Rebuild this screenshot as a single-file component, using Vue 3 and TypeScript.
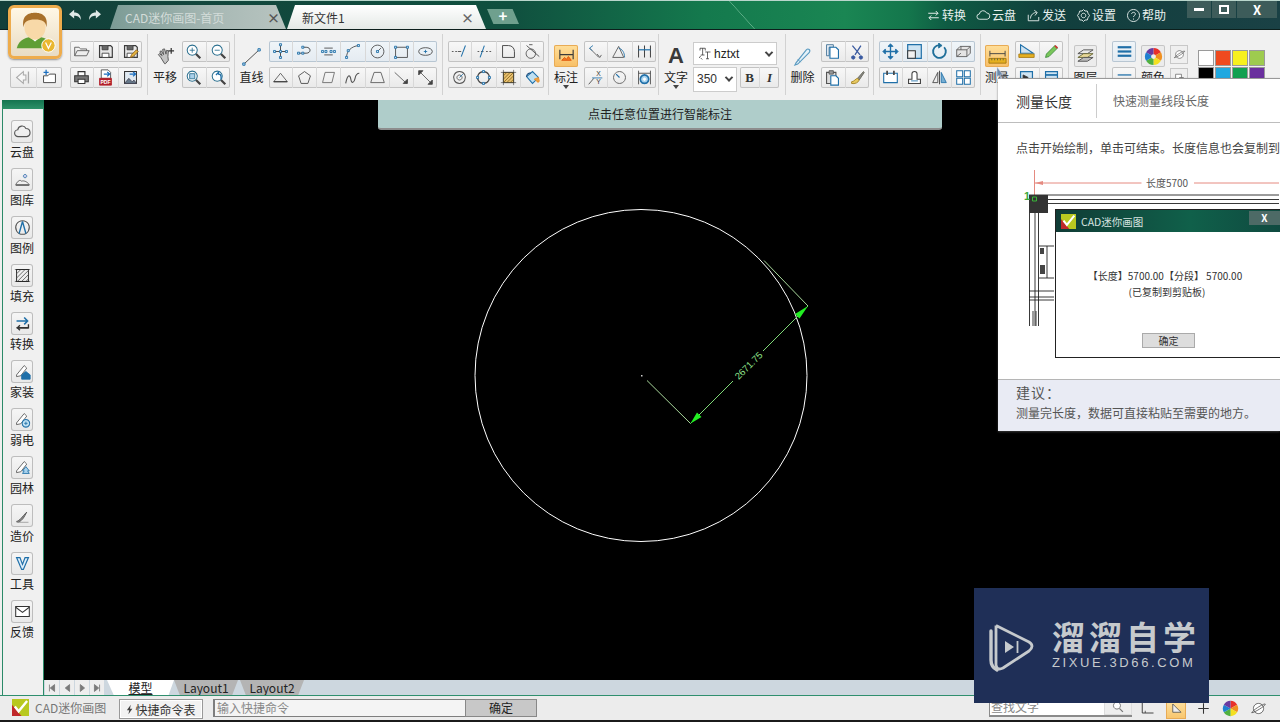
<script setup lang="ts">
type P = [string, string?, string?, number?];
const K = '#444';
const B = '#1f6fa8';
const nodes = (pts: number[][]) => pts.map(([x, y]) => `M${x - 1.2} ${y - 1.2}h2.4v2.4h-2.4z`).join('');
const nodeP = (pts: number[][]): P => [nodes(pts), B, '#cfe4f3', 1];
const glass = (fill = '#fff'): P[] => [
  ['M8.5 2.5a6 6 0 1 0 .01 0z', '#2a6f8f', fill, 1.2],
  ['M13 13l5 5', '#444', undefined, 2.6],
];
const floppy: P[] = [
  ['M3 3h13l2 2v12H3z', '#3c3c3c', '#e8e8e8', 1.4],
  ['M6 3v5h7V3', '#3c3c3c', '#666', 1],
  ['M6 12h8v5H6z', '#3c3c3c', '#fff', 1],
];

const icons: Record<string, P[]> = {
  open: [['M2 15V5h5l2 2h7v2', '#555'], ['M2 15l3-6h14l-3 6z', '#555', '#eee']],
  save: floppy,
  saveas: [...floppy, ['M10 17l1-3 6-6 2 2-6 6z', '#8a5a10', '#e8b840']],
  print: [['M6 8V3h8v5', '#333', '#fff', 1.4], ['M2 8h16v7H2z', '#333', '#777', 1.2], ['M6 12h8v5H6z', '#333', '#fff', 1.2]],
  pdf: [['M5 1h8l3 3v7H5z', '#444', '#fff'], ['M8 6h7M12 3.5l3 2.5-3 2.5', '#1b6fc0', undefined, 1.4], ['M3 11h14v8H3z', '#b3202a', '#b3202a']],
  imgexp: [['M3 3h14v14H3z', '#333', '#e0e9f1', 1.2], ['M3 17l5-6 4 4 2-2 3 4z', '#445', '#66798a'], ['M9 6h7M13 3.5l3 2.5-3 2.5', '#1b6fc0', undefined, 1.4]],
  backbar: [['M11 3L3 10l8 7v-4h3V7h-3z', '#a8a8a8', '#f7f7f7', 1.2], ['M17 3v14', '#a8a8a8', undefined, 1.5]],
  newtab: [['M3 8h5l2-2h7v10H3z', '#333', '#fff'], ['M6 1v6M3 4h6', '#1b6fc0', undefined, 1.5]],
  hand: [['M5 11L2.5 8l1-1 3 2-2.500-4 1.500-1 2.500 4-1-5.500 2-.5 1.500 5.500.5-4 2 .5-.5 6 .5 4-3 3.500H9z', '#555', '#c4c4c4'], ['M16 1v6M13 4h6', '#333', undefined, 1.3]],
  zoomin: [...glass(), ['M5.500 8.500h6M8.500 5.500v6', '#2a6f8f']],
  zoomout: [...glass(), ['M5.500 8.500h6', '#2a6f8f']],
  zoomwin: [...glass('#fff'), ['M5.500 5.500h6v6h-6z', '#2a6f8f', '#a9d0ea']],
  zoomprev: [...glass(), ['M7 7l3-3v2c2 0 3 1 3 3v3', B, undefined, 1.5]],
  line: [['M2 18L18 3', '#4a4a4a'], nodeP([[2, 18], [18, 3]])],
  ortho: [['M10 2v16M2 10h16', '#333'], nodeP([[10, 2], [10, 10], [10, 17], [3, 10], [17, 10]])],
  polycurve: [['M2 12h6M8 5h4c6 0 6 7 0 7H8', '#333'], nodeP([[3, 12], [8, 12], [8, 5]])],
  dash: [['M5 6h10M5 14h10', '#444'], nodeP([[3, 10], [7, 10], [13, 10], [17, 10]])],
  arc: [['M3 17C3 9 9 4 17 3', '#444'], nodeP([[3, 17], [5, 9], [17, 3]])],
  circdot: [['M10 2.500a7.500 7.500 0 1 0 .01 0z', '#444'], ['M10 10l4-4', '#444'], nodeP([[10, 10]])],
  rect: [['M3 5h14v12H3z', '#444'], nodeP([[3, 5], [17, 5], [3, 17]])],
  ellipse: [['M2 10c0-6 16-6 16 0s-16 6-16 0z', '#444'], ['M8 10h4M10 8v4', B]],
  tri: [['M2 15L10 5l8 10z', '#555'], ['M2 15h16', '#222']],
  penta: [['M10 3l7 5-3 9H6L3 8z', '#444']],
  para: [['M6 4h11l-3 12H3z', '#666']],
  spline: [['M2 17C4 6 7 6 8 12s4 4 5-1 3-6 5-6', '#555', undefined, 1.3]],
  trap: [['M6 4h8l4 12H2z', '#555']],
  arrowd: [['M2 4l14 13', '#555'], ['M12 17h5v-5z', '#444', '#444']],
  arrowb: [['M3 3l14 14', '#555'], ['M2 7V2h5zM18 13v5h-5z', '#444', '#444']],
  trim: [['M1 10h2M5 10h2', '#444'], ['M8 10h4', '#444'], ['M12 16l5-13', B, undefined, 1.2]],
  extend: [['M3 10h2M7 10h3M13 10h2M17 10h2', '#444'], ['M6 17l5-14', B, undefined, 1.2]],
  fillet: [['M3 17V3h7c4 0 7 3 7 7v7z', '#444', undefined, 1.1]],
  chamfer: [['M8 7a5.500 5.500 0 1 0 .01 0z', '#444'], ['M3 3l15 13', '#444'], ['M6 2h4', '#444']],
  circle2: [['M10 3a7 7 0 1 0 .01 0z', '#555', undefined, 1.2], ['M10 7a3 3 0 1 0 .01 0z', '#555'], ['M10 10l4-4', B]],
  circle3: [['M10 3a7 7 0 1 0 .01 0z', '#444', undefined, 1.4], nodeP([[10, 3], [17, 10], [10, 17], [3, 10]])],
  hatch: [['M4 4h12v12H4z', '#5a4a20', '#e8c070'], ['M4 8l4-4M4 12l8-8M4 16l12-12M8 16l8-8M12 16l4-4', '#8a6a20'], ['M1 4h18M1 16h18M4 1v18M16 1v18', '#333', undefined, .7]],
  bucket: [['M3 9l7-6 7 7-7 7z', B, '#bfe0f2', 1.2], ['M3 9c0-3 3-5 5-4', '#147', undefined, 1.2], ['M12 12l5-2 1 4c0 2-3 2-3 0z', '#e8902a', '#f0a040']],
  dimA: [['M3 6l11 11', '#555'], ['M7 3l-4 3 3 3', B], ['M12 13l3 4 2-3', '#555']],
  dimB: [['M2 17h13L9 4z', '#555'], ['M9 6c4 1 7 5 7 11', B]],
  dimC: [['M3 3v14M10 3v14M17 3v14', '#444', undefined, 1.2], ['M3 8h14', B, undefined, 1.4]],
  xy: [['M2 18L8 11', '#444'], ['M6 10.500h12', B]],
  radius: [['M10 3a7 7 0 1 0 .01 0z', '#555'], ['M10 10L6 6', B, undefined, 1.3]],
  dimset: [['M3 2v16M17 2v16M3 5h14', '#444'], ['M10 7a5 5 0 1 0 .01 0z', B, '#a7d2ee', 2], ['M10 10.500a1.500 1.500 0 1 0 .01 0z', '#fff', '#fff']],
  dimact: [['M3 3v10M17 3v10M3 8h14', '#3a3a3a', undefined, 1.2], ['M5 14l3-3 2 2 2-3 3 4z', '#e05a10', '#ef7a20']],
  tt: [['M4 6V3h7v3M7.500 3v9M5 12h5', '#333'], ['M11 8h7M14 8v9M12 17h4', '#333', undefined, 1], ['M3 16l2-3M5 16l2 2', '#333']],
  eraser: [['M3 17l-1 2 3-1L17 6c2-3-1-5-3-3z', '#5a9ac0', '#e4f1f8', 1.2], ['M5 13l3 3', '#5a9ac0']],
  copy: [['M3 2h8v3H6v10H3z', '#3a6a90', '#e6eef5'], ['M7 5h7l3 3v10H7z', B, '#fff', 1.3]],
  scissors: [['M4 3l9 11M14 3L7 14', '#3a5aa0', undefined, 1.5], ['M5 15a2 2 0 1 0 .01 0zM14 15a2 2 0 1 0 .01 0z', '#3a5aa0', '#3a5aa0']],
  paste: [['M3 4h11v13H3z', '#555', '#ddd', 1.3], ['M6 2h5v4H6z', '#555', '#999'], ['M8 8h6l3 3v8H8z', B, '#fff', 1.3]],
  brush: [['M10 11l7-8 1 1-6 9z', '#665', '#888'], ['M3 15c3 0 5-4 7-4l2 2c-1 3-5 5-9 4z', '#a08020', '#e6c860']],
  move: [['M10 3v14M3 10h14', B, undefined, 1.6], ['M10 1l3 3H7zM10 19l-3-3h6zM1 10l3-3v6zM19 10l-3 3V7z', B, B]],
  scale: [['M2 2h16v16H2z', B, '#cde3f2', 1.4], ['M2 9h9v9H2z', '#333', '#f2f2f2', 1.2]],
  rotate: [['M15.500 5A7.500 7.500 0 1 1 10 2.500', '#1f6f9a', undefined, 2.2], ['M9 0v6l4-3z', '#1f6f9a', '#1f6f9a']],
  cube: [['M2 8l4-4h12v8l-4 4H2z', '#555', '#e4e4e4'], ['M2 8h12v8M14 8l4-4M7 4v4M7 12l-5 4', '#555']],
  arrayt: [['M2 5h16v11H2z', '#1f6fa8', '#fff', 1.3], ['M6 2v5M14 2v5', '#444', undefined, 2]],
  stretch: [['M3 17h14v-5h-4V6c0-4-6-4-6 0v6H3z', '#444', '#fff', 1.3], ['M6 14h8', B]],
  mirror: [['M10 2v16', '#333'], ['M8 4v12H2z', '#444', 'none'], ['M12 4v12h6z', B, '#77aed2']],
  grid4: [['M2 2h7v7H2zM11 2h7v7h-7zM2 11h7v7H2zM11 11h7v7h-7z', B, '#fff', 1.2]],
  measure: [['M2 4v6M18 4v6M2 7h16', '#444'], ['M1 12h18v5H1z', '#a87a10', '#e5b020'], ['M4 12v2M7 12v2M10 12v2M13 12v2M16 12v2', '#664']],
  area: [['M3 2v10l15 0z', B, '#cfe3f1', 1.3], ['M1 13h18v4H1z', '#a87a10', '#e5b020']],
  pencil: [['M4 13L14 3l3 3L7 16l-4 1z', '#3a8a3a', '#7ac65a'], ['M14 3l3 3', '#c33', undefined, 2]],
  boxa: [['M3 3h14v14H3z', B, '#cfe4f3', 1.4], ['M6 7l6 3-6 3z', '#333', '#333']],
  boxb: [['M3 3h14v14H3z', B, '#cfe4f3', 1.4], ['M3 7h14', B, undefined, 2]],
  layers: [['M2 7l6-4h10l-6 4z', '#555', '#e8e8e8'], ['M2 11l6-4h10l-6 4z', '#6a6a3a', '#e8d898'], ['M2 15l6-4h10l-6 4z', '#555', '#bbb']],
  lines3: [['M2 5h16', B, undefined, 2.6], ['M2 10h16', B, undefined, 2.6], ['M2 15h16', B, undefined, 2.6]],
  lines2: [['M2 7h16', B, undefined, 1.5], ['M2 12h16', B, undefined, 1.5], ['M2 15h16', B, undefined, .8]],
  planet: [['M10 4a6 6 0 1 0 .01 0z', '#555', '#fff'], ['M2 15C5 15 18 7 18 5S4 11 2 15z', '#555']],
  smbox: [['M4 5h9v9H4z', '#555', '#fff'], ['M10 10h6v6h-6z', '#555', '#ddd']],
  cloud: [['M5 16a4 4 0 0 1-.5-8 5 5 0 0 1 9.500-1.500 4.800 4.800 0 0 1 1 9.500z', '#555', 'none', 1.3]],
  pic: [['M2 16c3-5 5-6 7-4 2-1 6 0 9 4z', '#555', '#eee'], ['M13 4a2 2 0 1 0 .01 0z', '#3a7aaa', '#cce'], ['M2 17h16', '#555']],
  compass: [['M10 2a8 8 0 1 0 .01 0z', '#555', undefined, 1.2], ['M10 3L6 17M10 3l4 14', B, undefined, 1.6]],
  hatch2: [['M3 3h14v14H3z', '#333', undefined, 1.2], ['M3 8l5-5M3 13l10-10M4 17l13-13M9 17l8-8M14 17l3-3', '#555'], ['M1 3h18M1 17h18', '#222', undefined, .7]],
  swap: [['M3 7h12M12 3l4 4-4 4', B, undefined, 1.8], ['M3 15h14v-4', '#333', undefined, 1.6], ['M17 15H4M7 12l-3 3 3 3', '#333', undefined, 1.6]],
  house: [['M3 14L12 3l3 3-7 9-5 1z', '#555', '#fff'], ['M9 14l5-4 5 4v5h-10z', B, B]],
  wire: [['M3 14L12 3l3 3-7 9-5 1z', '#555', '#fff'], ['M14 10a4.500 4.500 0 1 0 .01 0z', B, '#bfe0f2', 1.3], ['M12 14.500h4M14 12.500v4', B]],
  tree: [['M3 14L12 3l3 3-7 9-5 1z', '#555', '#fff'], ['M14 9l4 5h-2l2 3h-8l2-3h-2z', B, '#a9d3ee']],
  pen2: [['M3 17c4-1 6-5 12-11-3 6-5 10-10 12z', '#555', '#888'], ['M3 18h14', '#999']],
  vv: [['M3 3l6 14h2l6-14h-4l-3 8-3-8z', B, '#dfeefa', 1.4]],
  mail: [['M2 4h16v12H2z', '#333', '#fff', 1.2], ['M2 5l8 6 8-6', '#333', undefined, 1.2]],
  find: [['M8.500 3a5 5 0 1 0 .01 0z', '#666', '#fff', 1.2], ['M12 12l5 5', '#777', undefined, 1.8]],
  lcorner: [['M3 2v14h15', '#333', undefined, 1.2], ['M7 16v-3', '#333']],
  tri3: [['M5 4v11h11z', '#444', '#eee']],
  plus: [['M10 3v14M3 10h14', '#333', undefined, 1.4]],
  cloudw: [['M5 15a3.500 3.500 0 0 1-.5-7 5 5 0 0 1 9.500-1.500 4.300 4.300 0 0 1 1 8.500z', '#e8f0ee']],
  swapw: [['M3 7h13M13 4l3 3-3 3', '#e8f0ee', undefined, 1.3], ['M17 13H4M7 10l-3 3 3 3', '#e8f0ee', undefined, 1.3]],
  sendw: [['M3 9v8h14v-5', '#e8f0ee'], ['M6 14c0-5 4-8 8-8M11 3l4 3-3 4', '#e8f0ee']],
  gearw: [['M10 2l2 2h3l1 3 2 3-2 3-1 3h-3l-2 2-2-2H5l-1-3-2-3 2-3 1-3h3z', '#e8f0ee'], ['M10 7a3 3 0 1 0 .01 0z', '#e8f0ee']],
  helpw: [['M10 2a8 8 0 1 0 .01 0z', '#e8f0ee'], ['M7.500 8c0-3 5-3 5 0 0 2-2.500 2-2.500 4M10 14v1.500', '#e8f0ee', undefined, 1.2]],
};

type Item =
  | { k: 'rows'; g: number; w: number; rows: string[][]; tint?: boolean }
  | { k: 'sep'; g: number }
  | { k: 'big'; g: number; w: number; label: string; icon: string; active?: boolean; arrow?: boolean }
  | { k: 'font'; g: number }
  | { k: 'small'; g: number }
  | { k: 'swatch'; g: number };

const items: Item[] = [
  { k: 'rows', g: 0, w: 52, rows: [[], ['backbar', 'newtab']] },
  { k: 'rows', g: 8, w: 72, rows: [['open', 'save', 'saveas'], ['print', 'pdf', 'imgexp']] },
  { k: 'sep', g: 5 },
  { k: 'big', g: 5, w: 24, label: '平移', icon: 'hand' },
  { k: 'rows', g: 5, w: 48, rows: [['zoomin', 'zoomout'], ['zoomwin', 'zoomprev']] },
  { k: 'sep', g: 4 },
  { k: 'big', g: 4, w: 25, label: '直线', icon: 'line' },
  { k: 'rows', g: 5, w: 168, tint: true, rows: [['ortho', 'polycurve', 'dash', 'arc', 'circdot', 'rect', 'ellipse'], ['tri', 'penta', 'para', 'spline', 'trap', 'arrowd', 'arrowb']] },
  { k: 'sep', g: 5 },
  { k: 'rows', g: 5, w: 96, rows: [['trim', 'extend', 'fillet', 'chamfer'], ['circle2', 'circle3', 'hatch', 'bucket']] },
  { k: 'sep', g: 4 },
  { k: 'big', g: 5, w: 24, label: '标注', icon: 'dimact', active: true, arrow: true },
  { k: 'rows', g: 6, w: 72, rows: [['dimA', 'dimB', 'dimC'], ['xy', 'radius', 'dimset']] },
  { k: 'sep', g: 2 },
  { k: 'big', g: 3, w: 28, label: '文字', icon: '', arrow: true },
  { k: 'font', g: 3 },
  { k: 'sep', g: 6 },
  { k: 'big', g: 4, w: 25, label: '删除', icon: 'eraser' },
  { k: 'rows', g: 6, w: 48, rows: [['copy', 'scissors'], ['paste', 'brush']] },
  { k: 'sep', g: 4 },
  { k: 'rows', g: 5, w: 96, tint: true, rows: [['move', 'scale', 'rotate', 'cube'], ['arrayt', 'stretch', 'mirror', 'grid4']] },
  { k: 'sep', g: 5 },
  { k: 'big', g: 4, w: 24, label: '测量', icon: 'measure', active: true },
  { k: 'rows', g: 6, w: 48, rows: [['area', 'pencil'], ['boxa', 'boxb']] },
  { k: 'sep', g: 5 },
  { k: 'big', g: 5, w: 23, label: '图层', icon: 'layers' },
  { k: 'sep', g: 8 },
  { k: 'rows', g: 6, w: 24, tint: true, rows: [['lines3'], ['lines2']] },
  { k: 'big', g: 5, w: 24, label: '颜色', icon: 'wheel' },
  { k: 'small', g: 5 },
  { k: 'swatch', g: 10 },
];

const swatches = ['#ffffff', '#ef4a1f', '#f7f01e', '#9ecb4f', '#000000', '#1fa8e0', '#12a050', '#6a2f9e'];
const menu = [
  { icon: 'swapw', label: '转换' },
  { icon: 'cloudw', label: '云盘' },
  { icon: 'sendw', label: '发送' },
  { icon: 'gearw', label: '设置' },
  { icon: 'helpw', label: '帮助' },
];
const side = [
  { icon: 'cloud', label: '云盘' },
  { icon: 'pic', label: '图库' },
  { icon: 'compass', label: '图例' },
  { icon: 'hatch2', label: '填充' },
  { icon: 'swap', label: '转换' },
  { icon: 'house', label: '家装' },
  { icon: 'wire', label: '弱电' },
  { icon: 'tree', label: '园林' },
  { icon: 'pen2', label: '造价' },
  { icon: 'vv', label: '工具' },
  { icon: 'mail', label: '反馈' },
];
const wheelColors = ['#e8302a', '#f09020', '#f4e020', '#50b040', '#2080d0', '#6a3aa0'];
const wheel = wheelColors.map((c, i) => {
  const a0 = (i * Math.PI) / 3 - Math.PI / 2;
  const a1 = ((i + 1) * Math.PI) / 3 - Math.PI / 2;
  const p = (a: number) => `${(10 + 9 * Math.cos(a)).toFixed(2)} ${(10 + 9 * Math.sin(a)).toFixed(2)}`;
  return { c, d: `M10 10L${p(a0)}A9 9 0 0 1 ${p(a1)}z` };
});
const navs = ['M10 3L5 7l5 4zM4 3v8', 'M10 3L5 7l5 4z', 'M5 3l5 4-5 4z', 'M4 3l5 4-5 4zM10 3v8'];
</script>

<template>
  <div class="app">
    <header class="titlebar">
      <div class="history">
        <svg viewBox="0 0 16 14" class="hist"><path d="M1 6l6-5v3c5 0 8 3 8 9-2-4-4-5-8-5v3z" fill="#dfe8e6" /></svg>
        <svg viewBox="0 0 16 14" class="hist"><path d="M15 6L9 1v3c-5 0-8 3-8 9 2-4 4-5 8-5v3z" fill="#dfe8e6" /></svg>
      </div>
      <div class="tab tab-off"><span>CAD迷你画图-首页</span><b>×</b></div>
      <div class="tab tab-on"><span>新文件1</span><b>×</b></div>
      <div class="tab-add">+</div>
      <nav class="menu">
        <span v-for="m in menu" :key="m.label" class="menu-item">
          <svg viewBox="0 0 20 20" class="menu-icon"><path v-for="(p, i) in icons[m.icon]" :key="i" :d="p[0]" :stroke="p[1]" fill="none" :stroke-width="p[3] ?? 1.2" /></svg>{{ m.label }}
        </span>
      </nav>
      <div class="winbtns">
        <span class="wb wb-min"><i></i></span>
        <span class="wb wb-max"><i></i></span>
        <span class="wb wb-close">X</span>
      </div>
    </header>

    <div class="ribbon">
      <template v-for="(it, n) in items" :key="n">
        <div v-if="it.k === 'sep'" class="sep" :style="{ marginLeft: it.g + 'px' }"></div>

        <div v-else-if="it.k === 'rows'" class="rows" :style="{ marginLeft: it.g + 'px', width: it.w + 'px' }">
          <div v-for="(r, ri) in it.rows" :key="ri" class="row" :class="{ empty: !r.length, tint: it.tint && ri === 0 }">
            <span v-for="ic in r" :key="ic" class="cell">
              <svg viewBox="0 0 20 20" class="ic">
                <path v-for="(p, i) in icons[ic]" :key="i" :d="p[0]" :stroke="p[1] ?? K" :fill="p[2] ?? 'none'" :stroke-width="p[3] ?? 1" />
                <text v-if="ic === 'pdf'" x="10" y="17.500" text-anchor="middle" class="pdf">PDF</text>
                <text v-if="ic === 'xy'" x="11" y="8" class="xyt">X</text>
                <text v-if="ic === 'xy'" x="11" y="18" class="xyt">Y</text>
              </svg>
            </span>
          </div>
        </div>

        <div v-else-if="it.k === 'big'" class="big" :style="{ marginLeft: it.g + 'px', width: it.w + 'px' }">
          <div class="big-icon" :class="{ active: it.active, boxed: it.icon === 'layers' || it.icon === 'wheel' }">
            <span v-if="!it.icon" class="big-a">A</span>
            <svg v-else-if="it.icon === 'wheel'" viewBox="0 0 20 20" class="ic-big"><path v-for="s in wheel" :key="s.c" :d="s.d" :fill="s.c" /><circle cx="10" cy="10" r="2.500" fill="#eee" /></svg>
            <svg v-else viewBox="0 0 20 20" class="ic-big"><path v-for="(p, i) in icons[it.icon]" :key="i" :d="p[0]" :stroke="p[1] ?? K" :fill="p[2] ?? 'none'" :stroke-width="p[3] ?? 1" /></svg>
          </div>
          <div class="big-label">{{ it.label }}</div>
          <i v-if="it.arrow" class="caret"></i>
        </div>

        <div v-else-if="it.k === 'font'" class="font" :style="{ marginLeft: it.g + 'px' }">
          <div class="fontname">
            <svg viewBox="0 0 20 20" class="ic-tt"><path v-for="(p, i) in icons.tt" :key="i" :d="p[0]" :stroke="p[1]" fill="none" stroke-width="1" /></svg>
            <span>hztxt</span><i class="chev"></i>
          </div>
          <div class="fontrow">
            <div class="fontsize"><span>350</span><i class="chev"></i></div>
            <div class="row bi"><span class="cell b">B</span><span class="cell it">I</span></div>
          </div>
        </div>

        <div v-else-if="it.k === 'small'" class="small" :style="{ marginLeft: it.g + 'px' }">
          <span class="smallbtn"><svg viewBox="0 0 20 20" class="ic"><path v-for="(p, i) in icons.planet" :key="i" :d="p[0]" :stroke="p[1]" :fill="p[2] ?? 'none'" stroke-width="1" /></svg></span>
          <span class="smallbtn"><svg viewBox="0 0 20 20" class="ic"><path v-for="(p, i) in icons.smbox" :key="i" :d="p[0]" :stroke="p[1]" :fill="p[2] ?? 'none'" stroke-width="1" /></svg></span>
        </div>

        <div v-else class="swatches" :style="{ marginLeft: it.g + 'px' }">
          <i v-for="s in swatches" :key="s" :style="{ background: s }"></i>
        </div>
      </template>
    </div>

    <main class="main">
      <aside class="side">
        <div class="side-top"></div>
        <div v-for="s in side" :key="s.label" class="side-item">
          <span class="side-btn">
            <svg viewBox="0 0 20 20" class="ic-side"><path v-for="(p, i) in icons[s.icon]" :key="i" :d="p[0]" :stroke="p[1] ?? K" :fill="p[2] ?? 'none'" :stroke-width="p[3] ?? 1" /></svg>
          </span>
          <span class="side-label">{{ s.label }}</span>
        </div>
      </aside>

      <div class="work">
        <div class="canvas">
          <svg class="draw" viewBox="44 100 1236 580">
            <circle cx="641" cy="375.500" r="166" fill="none" stroke="#fff" stroke-width="1" />
            <path d="M647 380.500L690.500 423.500M764 260.500L808 306" stroke="#a9d89c" fill="none" />
            <path d="M690.500 423.500L733 381M763 351L808 306" stroke="#7fd878" fill="none" />
            <path d="M690.500 423.500L697 412.500L701.500 417zM808 306L799.500 318.500L795 314z" fill="#22ee22" />
            <path d="M641 375h1.500v1.500H641z" fill="#ccc" />
            <text x="748.500" y="369" transform="rotate(-45 748.500 365.500)" text-anchor="middle" class="dimtext">2671.75</text>
          </svg>
          <div class="hint">点击任意位置进行智能标注</div>
        </div>
        <div class="sheets">
          <div class="sheet-nav">
            <span v-for="(d, i) in navs" :key="i" class="nav"><svg viewBox="0 0 14 14" class="nav-ic"><path :d="d" fill="#7a7a7a" stroke="#7a7a7a" /></svg></span>
          </div>
          <span class="sheet sheet-on">模型</span>
          <span class="sheet">Layout1</span>
          <span class="sheet">Layout2</span>
        </div>
      </div>
    </main>

    <footer class="status">
      <svg viewBox="0 0 18 18" class="applogo">
        <path d="M0 0h18v18H0z" fill="#b8c820" />
        <path d="M0 18V6l10 12z" fill="#c0282a" />
        <path d="M3 8l4 5L16 2" stroke="#fff" stroke-width="2.500" fill="none" />
      </svg>
      <span class="appname">CAD迷你画图</span>
      <button class="quick">
        <svg viewBox="0 0 10 14" class="bolt"><path d="M6 1L1 8h3l-1 5 5-7H5z" fill="#444" /></svg>快捷命令表
      </button>
      <div class="cmd">
        <span class="cmd-input">输入快捷命令</span>
        <span class="cmd-ok">确定</span>
      </div>
      <div class="status-right">
        <div class="findbox"><span>查找文字</span><b><svg viewBox="0 0 20 20" class="ic-find"><path v-for="(p, i) in icons.find" :key="i" :d="p[0]" :stroke="p[1]" :fill="p[2] ?? 'none'" :stroke-width="p[3]" /></svg></b></div>
        <svg viewBox="0 0 20 20" class="st-ic st-l"><path v-for="(p, i) in icons.lcorner" :key="i" :d="p[0]" :stroke="p[1]" fill="none" :stroke-width="p[3] ?? 1" /></svg>
        <span class="st-active"><svg viewBox="0 0 20 20" class="st-ic"><path v-for="(p, i) in icons.tri3" :key="i" :d="p[0]" :stroke="p[1]" :fill="p[2]" stroke-width="1" /></svg></span>
        <svg viewBox="0 0 20 20" class="st-ic st-plus"><path v-for="(p, i) in icons.plus" :key="i" :d="p[0]" :stroke="p[1]" fill="none" stroke-width="1.400" /></svg>
        <svg viewBox="0 0 20 20" class="st-ic st-wheel"><path v-for="s in wheel" :key="s.c" :d="s.d" :fill="s.c" /></svg>
        <svg viewBox="0 0 20 20" class="st-ic st-planet"><path v-for="(p, i) in icons.planet" :key="i" :d="p[0]" :stroke="p[1]" :fill="p[2] ?? 'none'" stroke-width="1" /></svg>
      </div>
    </footer>

    <!-- avatar sits across the title bar and the ribbon -->
    <div class="avatar">
      <svg viewBox="0 0 50 50" class="avatar-svg">
        <path d="M6 42c2-9 10-12 19-12s17 3 19 12z" fill="#5f9e35" />
        <path d="M19 30l6 5 6-5z" fill="#fff" />
        <ellipse cx="25" cy="20" rx="11" ry="13" fill="#f8d9a8" />
        <path d="M13 20C11 8 18 5 25 5s14 3 12 15c-1-6-4-8-12-8s-11 2-12 8z" fill="#a8702a" />
        <circle cx="39" cy="39" r="7" fill="#e9b730" stroke="#fff" />
        <path d="M36 36l3 6 3-6" stroke="#fff" stroke-width="1.300" fill="none" />
      </svg>
    </div>

    <svg class="cursor" viewBox="0 0 8 12"><path d="M1 0v10l2-2 2 4 1-1-2-3h3z" fill="#6d8aa8" stroke="#dde" stroke-width=".5" /></svg>

    <section class="pop">
      <div class="pop-head">
        <span class="pop-title">测量长度</span>
        <i class="pop-div"></i>
        <span class="pop-sub">快速测量线段长度</span>
      </div>
      <div class="pop-body">
        <p class="pop-text">点击开始绘制，单击可结束。长度信息也会复制到剪贴板。</p>
        <div class="figure">
          <svg class="fig-svg" viewBox="1000 160 280 180">
            <path d="M1035.500 170v28M1035.500 183h107M1195 183h85" stroke="#e58a80" fill="none" />
            <path d="M1036 183l8-2v4z" fill="#e58a80" />
            <text x="1168" y="187" text-anchor="middle" class="fig-dim">长度5700</text>
            <path d="M1030 195h250M1030 199.500h250M1030 203.500h250M1030.500 195v131M1036 195v131M1039.500 195v131M1030 291h25M1030 297h25M1030 300h25M1034 326v-15M1037 326v-15M1040 246h15M1040 278h15M1048 246v32" stroke="#222" fill="none" stroke-width=".9" />
            <path d="M1030 195h19v18h-19z" fill="#333" />
            <path d="M1041 248h4v6h-4zM1041 265h5v9h-5z" fill="#444" />
            <path d="M1033.500 197h4v4h-4z" fill="none" stroke="#38b838" />
            <text x="1025" y="200" class="fig-one">1</text>
          </svg>
          <div class="dlg">
            <div class="dlg-head">
              <svg viewBox="0 0 18 18" class="dlg-logo">
                <path d="M0 0h18v18H0z" fill="#b8c820" />
                <path d="M0 18V6l10 12z" fill="#c0282a" />
                <path d="M3 8l4 5L16 2" stroke="#fff" stroke-width="2.500" fill="none" />
              </svg>
              <span>CAD迷你画图</span>
              <b>X</b>
            </div>
            <div class="dlg-body">
              <p class="dlg-l1">【长度】5700.00【分段】 5700.00</p>
              <p>(已复制到剪贴板)</p>
              <span class="dlg-ok">确定</span>
            </div>
          </div>
        </div>
      </div>
      <div class="pop-foot">
        <div class="foot-t">建议：</div>
        <div class="foot-d">测量完长度，数据可直接粘贴至需要的地方。</div>
      </div>
    </section>

    <div class="mark">
      <svg viewBox="0 0 48 50" class="mark-logo">
        <path d="M8 3.500L41 20q6 4 0 9L15 46q-6 3-7-3V3.500" stroke="#c6cacd" stroke-width="2.800" fill="none" stroke-linejoin="round" />
        <path d="M3 9v29q0 7 6 10" stroke="#c6cacd" stroke-width="3.400" fill="none" stroke-linecap="round" />
        <path d="M17 19l9 6-9 6z" fill="#c6cacd" />
        <path d="M29.500 19v12" stroke="#c6cacd" stroke-width="1.800" />
      </svg>
      <div class="mark-text">
        <div class="mark-cn">溜溜自学</div>
        <div class="mark-en">ZIXUE.3D66.COM</div>
      </div>
    </div>
  </div>
</template>

<style>
html, body { margin: 0; background: #000; }
</style>

<style scoped>
* { box-sizing: border-box; }
.app {
  position: relative; width: 1280px; height: 722px; overflow: hidden; display: flex; flex-direction: column;
  font-family: "Noto Sans CJK SC", "Liberation Sans", sans-serif; font-size: 12px; color: #333; background: #efefef;
}
/* title bar */
.titlebar {
  flex: 0 0 30px; display: flex; align-items: flex-end; position: relative; padding-left: 68px;
  border-top: 1px solid #b9d6cc; border-bottom: 1px solid #0c1f1c;
  background:
    linear-gradient(48deg, transparent 49%, rgba(190,240,210,.45) 50%, transparent 51%) 712px 0/60px 100% no-repeat,
    linear-gradient(90deg, #133f3a 0, #10503f 40%, #14794d 55%, #1a8653 66%, #14764c 71%, #0f5b43 74%, #113f3d 82%, #1a4145 100%);
}
.history { display: flex; gap: 6px; width: 42px; align-self: center; }
.hist { width: 14px; height: 12px; }
.tab { height: 24px; display: flex; align-items: center; justify-content: space-between; clip-path: polygon(0 100%, 8px 0, calc(100% - 10px) 0, 100% 100%); }
.tab b { font-weight: 700; font-size: 13px; }
.tab-off { width: 176px; padding: 0 6px 0 15px; color: #d3dcd9; background: linear-gradient(90deg, #7b9b95, #a8b9b5 60%, #b8c4c0); }
.tab-off b { color: #555; }
.tab-on { width: 199px; margin-left: 1px; padding: 0 12px 0 15px; color: #333; background: linear-gradient(#fff, #e4e9e6); }
.tab-on b { color: #666; }
.tab-add { width: 32px; height: 15px; margin: 0 0 5px 1px; text-align: center; line-height: 14px; color: #fff; font-size: 15px; font-weight: 700; background: #6fa08e; clip-path: polygon(0 0, 80% 0, 100% 100%, 20% 100%); }
.menu { position: absolute; left: 926px; top: 5px; display: flex; gap: 10px; color: #e8f0ee; }
.menu-item { display: flex; align-items: center; line-height: 18px; }
.menu-icon { width: 15px; height: 15px; margin-right: 1px; }
.winbtns { position: absolute; left: 1187px; top: 0; display: flex; gap: 1px; height: 17px; }
.wb { display: flex; align-items: center; justify-content: center; background: #3d5c5a; color: #fff; font-weight: 700; font-size: 13px; }
.wb-min { width: 24px; }
.wb-min i { display: block; width: 10px; height: 3px; background: #fff; }
.wb-max { width: 24px; }
.wb-max i { display: block; width: 10px; height: 9px; border: 2px solid #fff; }
.wb-close { width: 40px; }
/* ribbon */
.ribbon { flex: 0 0 70px; display: flex; padding: 11px 0 0 10px; background: #f1f1f1; align-items: flex-start; }
.sep { width: 1px; height: 61px; margin-top: -7px; background: #d2d2d2; }
.rows { display: flex; flex-direction: column; gap: 5px; flex: none; }
.row { display: flex; height: 21px; border-radius: 2px; box-shadow: inset 0 0 0 1px #c3c3c3; background: linear-gradient(#f8f8f8, #e9e9e9); }
.row.tint { box-shadow: inset 0 0 0 1px #b8c6d2; background: linear-gradient(#f0f5f9, #e4ebf1); }
.row.empty { box-shadow: none; background: none; }
.cell { flex: 1; display: flex; align-items: center; justify-content: center; border-left: 1px solid #d8d8d8; }
.cell:first-child { border-left: 0; }
.ic { width: 17px; height: 17px; }
.pdf { font: 700 6px "Liberation Sans", sans-serif; fill: #fff; }
.xyt { font: 8px "Liberation Sans", sans-serif; fill: #333; }
.big { flex: none; display: flex; flex-direction: column; align-items: center; position: relative; padding-top: 4px; }
.big-icon { width: 100%; height: 22px; display: flex; align-items: center; justify-content: center; border-radius: 2px; }
.big-icon.active { background: linear-gradient(#ffdf9a, #f8bf66); box-shadow: inset 0 0 0 1px #e8ab55; }
.big-icon.boxed { background: #ececec; box-shadow: inset 0 0 0 1px #c6c6c6; }
.big-a { font: 700 22px/22px "Liberation Sans", sans-serif; color: #3a3a3a; }
.ic-big { width: 19px; height: 19px; }
.big-label { line-height: 17px; margin-top: 1px; white-space: nowrap; color: #222; }
.caret { width: 0; height: 0; border: 3px solid transparent; border-top: 4px solid #444; margin-top: 0; }
.font { flex: none; width: 86px; }
.fontname { width: 84px; height: 23px; margin-top: 1px; display: flex; align-items: center; padding: 0 5px 0 4px; background: #fff; box-shadow: inset 0 0 0 1px #ccc; font: 12px "Liberation Sans", sans-serif; color: #222; }
.fontname span { flex: 1; margin-left: 2px; }
.ic-tt { width: 15px; height: 15px; }
.chev { width: 6px; height: 6px; border: solid #444; border-width: 0 2px 2px 0; transform: rotate(45deg) translate(-1px, -1px); }
.fontrow { display: flex; margin-top: 2px; gap: 3px; }
.fontsize { width: 44px; height: 25px; display: flex; align-items: center; justify-content: space-between; padding: 0 5px 2px 4px; background: #fff; box-shadow: inset 0 0 0 1px #ccc; font: 12px "Liberation Sans", sans-serif; }
.bi { width: 39px; }
.b { font: 700 13px "Liberation Serif", serif; }
.it { font: italic 700 13px "Liberation Serif", serif; }
.small { flex: none; width: 18px; padding-top: 4px; display: flex; flex-direction: column; gap: 4px; }
.smallbtn { width: 18px; height: 19px; display: flex; align-items: center; justify-content: center; box-shadow: inset 0 0 0 1px #c8c8c8; background: #efefef; }
.smallbtn .ic { width: 13px; height: 13px; }
.swatches { flex: none; width: 66px; margin-top: 9px; display: grid; grid-template-columns: repeat(4, 16px); gap: 1px; }
.swatches i { display: block; height: 16px; box-shadow: inset 0 0 0 1px #9a9a9a; }
/* main */
.main { flex: 0 0 596px; display: flex; padding-left: 2px; border-bottom: 1px solid #2f8f6e; }
.side { flex: 0 0 42px; padding-right: 2px; border-left: 1px solid #2b8a68; border-right: 1px solid #2b8a68; background: #f0f0f0; }
.side-top { height: 9px; margin: 0 -3px 11px -1px; background: linear-gradient(#14734f, #2c9068); }
.side-item { height: 48px; display: flex; flex-direction: column; align-items: center; }
.side-btn { width: 22px; height: 23px; display: flex; align-items: center; justify-content: center; border-radius: 3px; box-shadow: inset 0 0 0 1px #bdbdbd; background: linear-gradient(#f6f6f6, #e8e8e8); }
.ic-side { width: 17px; height: 17px; }
.side-label { line-height: 18px; margin-top: 0; color: #222; }
.work { flex: 1; display: flex; flex-direction: column; min-width: 0; }
.canvas { flex: 1; position: relative; background: #000; overflow: hidden; }
.draw { display: block; width: 100%; height: 100%; }
.dimtext { font: 9.500px "Liberation Sans", sans-serif; fill: #8fe08a; }
.hint { position: absolute; left: 334px; top: 0; width: 564px; height: 30px; line-height: 28px; text-align: center; background: #afcdca; border-bottom: 2px solid #8d8d8d; border-radius: 0 0 3px 3px; color: #222; }
.sheets { flex: 0 0 15px; display: flex; align-items: stretch; background: #cdd7df; padding-left: 1px; }
.sheet-nav { display: flex; gap: 1px; margin-right: 3px; }
.nav { width: 14px; display: flex; align-items: center; justify-content: center; background: #eee; }
.nav-ic { width: 12px; height: 12px; }
.sheet { width: 64px; margin-right: 2px; text-align: center; line-height: 15px; background: #b4b4b4; color: #222; clip-path: polygon(0 0, 100% 0, 91% 100%, 9% 100%); font-size: 12px; }
.sheet-on { width: 67px; margin-right: 0; background: #fff; text-decoration: underline; clip-path: polygon(0 0, 100% 0, 92% 100%, 10% 100%); }
/* status */
.status { flex: 1; display: flex; align-items: flex-start; padding: 3px 0 0 12px; background: #ececec; border-bottom: 2px solid #1b1b1b; position: relative; }
.applogo { width: 17px; height: 17px; }
.appname { margin-left: 6px; width: 84px; line-height: 18px; color: #777; }
.quick { width: 84px; height: 20px; padding: 0; display: flex; align-items: center; justify-content: center; font: inherit; color: #333; background: #f2f2f2; border: 1px solid #999; box-shadow: inset 0 0 0 1px #fff; }
.bolt { width: 8px; height: 11px; margin-right: 1px; }
.cmd { margin-left: 10px; display: flex; height: 18px; }
.cmd-input { width: 252px; line-height: 15px; padding-left: 2px; color: #888; background: #f4f4f4; border: 1px solid #7e7e7e; border-width: 1px 0 1px 2px; }
.cmd-ok { width: 72px; text-align: center; line-height: 16px; background: #c8c8c8; border: 1px solid #888; color: #222; }
.status-right { position: absolute; left: 989px; top: 0; display: flex; align-items: center; height: 24px; }
.findbox { width: 143px; height: 18px; display: flex; margin-right: 8px; background: #fff; border: 1px solid #8a8a8a; border-width: 0 0 2px 1px; color: #888; line-height: 15px; }
.findbox span { flex: 1; padding-left: 1px; }
.findbox b { width: 28px; background: #eee; display: flex; align-items: center; justify-content: center; box-shadow: inset 0 0 0 1px #ddd; }
.ic-find { width: 14px; height: 14px; }
.st-ic { width: 15px; height: 15px; flex: none; }
.st-active { width: 20px; height: 21px; margin-left: 11px; display: flex; align-items: center; justify-content: center; background: linear-gradient(#ffe6a8, #f8c56c); box-shadow: inset 0 0 0 1px #e8ab55; }
.st-plus { margin-left: 10px; }
.st-wheel { width: 17px; height: 17px; margin-left: 11px; }
.st-planet { width: 17px; height: 17px; margin-left: 11px; }
/* overlays */
.avatar { position: absolute; left: 8px; top: 5px; width: 54px; height: 54px; border: 3px solid #eeac4c; border-radius: 6px; background: linear-gradient(#fff7e5, #e8dcc4); box-shadow: 0 1px 2px rgba(0,0,0,.4); }
.avatar-svg { display: block; width: 48px; height: 48px; }
.cursor { position: absolute; left: 996px; top: 67px; width: 8px; height: 12px; z-index: 3; }
.pop { position: absolute; left: 998px; top: 78px; width: 282px; height: 353px; background: #fff; border-top: 1px solid #999; box-shadow: 0 1px 2px rgba(80,80,80,.7); display: flex; flex-direction: column; }
.pop-head { flex: 0 0 44px; display: flex; align-items: center; padding-left: 18px; border-bottom: 1px solid #bdbdbd; }
.pop-title { font-size: 14px; color: #333; width: 80px; }
.pop-div { width: 1px; height: 34px; background: #ccc; }
.pop-sub { margin-left: 16px; color: #666; }
.pop-body { flex: 1; min-height: 0; overflow: hidden; }
.pop-text { margin: 16px 0 0 18px; line-height: 18px; white-space: nowrap; color: #444; }
.figure { position: relative; margin-top: 16px; }
.fig-svg { position: absolute; left: 0; top: -13px; width: 282px; height: 180px; }
.fig-dim { font-size: 10px; fill: #555; paint-order: stroke; stroke: #fff; stroke-width: 8px; }
.fig-one { font: 700 11px "Liberation Sans", sans-serif; fill: #3aa83a; }
.dlg { position: absolute; left: 57px; top: 36px; width: 226px; height: 149px; background: #fff; border: 1px solid #222; display: flex; flex-direction: column; }
.dlg-head { flex: 0 0 22px; display: flex; align-items: center; padding-left: 5px; position: relative; color: #d8e4e0; font-size: 10.500px; background: linear-gradient(90deg, #103c36, #10604a 60%, #0f4a40); }
.dlg-logo { width: 15px; height: 15px; margin-right: 5px; }
.dlg-head b { position: absolute; right: 0; top: 1px; width: 31px; height: 14px; text-align: center; line-height: 13px; background: #4d6a66; color: #fff; font-size: 10px; }
.dlg-body { flex: 1; text-align: center; font-size: 10px; color: #333; padding-top: 36px; position: relative; }
.dlg-body p { margin: 0 0 0 -2px; line-height: 16px; width: 226px; }
.dlg-body .dlg-l1 { margin-left: -4px; }
.dlg-ok { position: absolute; left: 86px; top: 101px; width: 53px; height: 15px; line-height: 14px; background: #ddd; border: 1px solid #aaa; }
.pop-foot { flex: 0 0 52px; padding: 1px 0 0 18px; background: #e9ebf4; border-top: 1px solid #b5b5b5; color: #555; }
.foot-t { font-size: 14px; line-height: 22px; letter-spacing: 1px; }
.foot-d { line-height: 20px; }
.mark { position: absolute; left: 974px; top: 588px; width: 235px; height: 115px; background: #1f2f57; display: flex; align-items: flex-start; padding: 34px 0 0 14px; }
.mark-logo { width: 48px; height: 50px; flex: none; }
.mark-text { margin-left: 16px; margin-top: -3px; color: #c6cacd; }
.mark-cn { font-size: 33px; line-height: 34px; font-weight: 700; letter-spacing: 4px; white-space: nowrap; }
.mark-en { font: 13px/15px "Liberation Sans", sans-serif; letter-spacing: 2.600px; white-space: nowrap; margin-top: 2px; }
</style>
